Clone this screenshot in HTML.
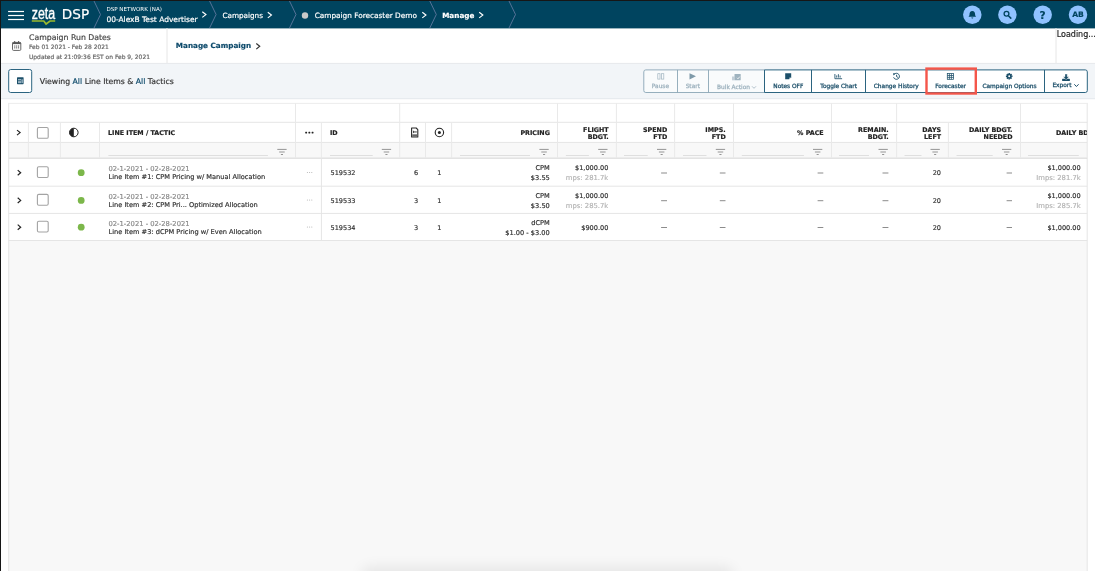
<!DOCTYPE html>
<html lang="en">
<head>
<meta charset="utf-8">
<title>Zeta DSP - Manage Campaign</title>
<style>
html,body{margin:0;padding:0}
body{width:1095px;height:571px;overflow:hidden;background:#fff;position:relative;
 font-family:"DejaVu Sans","Liberation Sans",sans-serif;color:#333}
.t{position:absolute;white-space:pre;line-height:10px;height:10px;margin:0;-webkit-text-stroke:0.18px currentColor}
.r{text-align:right}
.c{text-align:center}
.abs{position:absolute}
#edge-top{left:0;top:0;width:1095px;height:1px;background:#161616}
#edge-left{left:0;top:0;width:1px;height:571px;background:#161616}
#nav{left:1px;top:1px;width:1094px;height:27px;background:#00445f}
.nv{color:#fff}
#sub{left:1px;top:28px;width:1094px;height:35px;background:#fff}
#toolbar{left:1px;top:63px;width:1094px;height:35.5px;background:#f2f5f8}
#grid{left:8.7px;top:103.4px;width:1078.5px;height:480px;background:#f8f8f8}
#grid-head{left:8.7px;top:103.4px;width:1078.5px;height:39px;background:#fff}
#grid-rows{left:8.7px;top:158px;width:1078.5px;height:82.5px;background:#fff}
.teal{color:#0d4a6b}
.b{font-weight:bold}
.hd{font-weight:bold;font-size:6.36px;color:#222}
.cell{font-size:6.63px;color:#333}
.muted{color:#8a8a8a}
.faint{color:#b4b4b4}
.btn{font-size:5.85px;color:#1c4f69;-webkit-text-stroke:0.28px currentColor}
.dis{color:#9fb3bf}
svg{position:absolute;left:0;top:0;overflow:visible}
</style>
</head>
<body>
<div id="nav" class="abs"></div>
<div id="sub" class="abs"></div>
<div id="toolbar" class="abs"></div>
<div id="grid" class="abs"></div>
<div id="grid-head" class="abs"></div>
<div id="grid-rows" class="abs"></div>
<div class="abs" style="left:365px;top:571px;width:365px;height:10px;border-radius:6px;box-shadow:0 0 14px 4px rgba(0,0,0,0.08)"></div>
<svg style="will-change:transform" width="1095" height="571" viewBox="0 0 1095 571">
<rect x="8.7" y="142.9" width="1078.5" height="14.6" fill="#f8f8f8"/>
<rect x="8.1" y="10.9" width="15.9" height="1.2" fill="#fff" />
<rect x="8.1" y="14.9" width="15.9" height="1.2" fill="#fff" />
<rect x="8.1" y="18.9" width="15.9" height="1.2" fill="#fff" />
<text x="31.8" y="18.5" font-family="Liberation Sans, sans-serif" font-size="16" fill="#fff" stroke="#fff" stroke-width="0.35" textLength="23.4" lengthAdjust="spacingAndGlyphs">zeta</text>
<path d="M31.8 21 H43.8 L46.1 24 L50 21 H55.2" fill="none" stroke="#9ab92e" stroke-width="1.7" stroke-linejoin="miter"/>
<path d="M94.0 1 L100.5 14.5 L94.0 28" fill="none" stroke="#6b7fa6" stroke-width="0.8"/>
<path d="M209.6 1 L216.1 14.5 L209.6 28" fill="none" stroke="#6b7fa6" stroke-width="0.8"/>
<path d="M289.5 1 L296.0 14.5 L289.5 28" fill="none" stroke="#6b7fa6" stroke-width="0.8"/>
<path d="M429.8 1 L436.3 14.5 L429.8 28" fill="none" stroke="#6b7fa6" stroke-width="0.8"/>
<path d="M509.0 1 L515.5 14.5 L509.0 28" fill="none" stroke="#6b7fa6" stroke-width="0.8"/>
<path d="M202.3 11.8 L205.9 14.6 L202.3 17.4" fill="none" stroke="#fff" stroke-width="1.2"/>
<path d="M267.8 12.3 L271.40000000000003 15.1 L267.8 17.9" fill="none" stroke="#fff" stroke-width="1.2"/>
<path d="M422.3 12.3 L425.90000000000003 15.1 L422.3 17.9" fill="none" stroke="#fff" stroke-width="1.2"/>
<path d="M479.2 12.3 L482.8 15.1 L479.2 17.9" fill="none" stroke="#fff" stroke-width="1.2"/>
<circle cx="305" cy="15.5" r="3.2" fill="#c9c9c9"/>
<circle cx="972.3" cy="14.7" r="9.25" fill="#90c2ff"/>
<circle cx="1007.4" cy="14.7" r="9.25" fill="#90c2ff"/>
<circle cx="1042.7" cy="14.7" r="9.25" fill="#90c2ff"/>
<circle cx="1078.0" cy="14.7" r="9.25" fill="#90c2ff"/>
<path d="M972.3 10.9 c-2 0 -2.75 1.65 -2.75 3.2 c0 1.5 -0.55 2.15 -1.05 2.7 h7.6 c-0.5 -0.55 -1.05 -1.2 -1.05 -2.7 c0 -1.55 -0.75 -3.2 -2.75 -3.2 z M971.3 17.5 a1 1 0 0 0 2 0 z" fill="#00445f"/>
<circle cx="1006.5" cy="13.8" r="2.4" fill="none" stroke="#00445f" stroke-width="1.3"/><line x1="1008.4" y1="15.7" x2="1010.8" y2="18.1" stroke="#00445f" stroke-width="1.5" stroke-linecap="round"/>
<rect x="1" y="28" width="1094" height="0.4" fill="#00445f" />
<line x1="167" y1="28" x2="167" y2="63" stroke="#e6e6e6" stroke-width="1"/>
<line x1="1056" y1="28" x2="1056" y2="63" stroke="#e6e6e6" stroke-width="1"/>
<rect x="1" y="62.9" width="1094" height="0.8" fill="#e4e6e8" />
<g fill="none" stroke="#555" stroke-width="0.9"><rect x="12.5" y="42.4" width="8.3" height="8" rx="1"/></g><g fill="#555"><rect x="12.5" y="42.4" width="8.3" height="1.7"/><rect x="14.2" y="41" width="1" height="2"/><rect x="18.1" y="41" width="1" height="2"/><rect x="14.2" y="45.5" width="1.1" height="1.1"/><rect x="16.1" y="45.5" width="1.1" height="1.1"/><rect x="18" y="45.5" width="1.1" height="1.1"/><rect x="14.2" y="47.3" width="1.1" height="1.1"/><rect x="16.1" y="47.3" width="1.1" height="1.1"/><rect x="18" y="47.3" width="1.1" height="1.1"/></g>
<path d="M256.3 43.5 L259.7 46.3 L256.3 49.099999999999994" fill="none" stroke="#333" stroke-width="1.2"/>
<rect x="1" y="98.3" width="1094" height="0.9" fill="#e3e7eb" />
<rect x="8.7" y="69.5" width="23" height="23" rx="2" fill="#fff" stroke="#2b6480" stroke-width="1"/>
<rect x="17" y="77.2" width="6.6" height="7" rx="0.6" fill="#1c4f69"/><g fill="#cfe0ea"><rect x="18" y="79.3" width="3" height="0.8"/><rect x="18" y="80.8" width="3" height="0.8"/><rect x="18" y="82.3" width="3" height="0.8"/><rect x="21.6" y="79.3" width="1" height="3.8"/></g>
<path d="M764.5 69.9 H645.8 a2 2 0 0 0 -2 2 V90.5 a2 2 0 0 0 2 2 H764.5 z" fill="#f9fbfc" stroke="#8aa6b5" stroke-width="0.9"/>
<line x1="677.5" y1="69.9" x2="677.5" y2="92.5" stroke="#8aa6b5" stroke-width="0.9"/>
<line x1="708.5" y1="69.9" x2="708.5" y2="92.5" stroke="#8aa6b5" stroke-width="0.9"/>
<path d="M764.5 69.9 H1085.3 a2 2 0 0 1 2 2 V90.5 a2 2 0 0 1 -2 2 H764.5 z" fill="#fff" stroke="#2b6480" stroke-width="1"/>
<line x1="811.5" y1="69.9" x2="811.5" y2="92.5" stroke="#2b6480" stroke-width="1"/>
<line x1="865.5" y1="69.9" x2="865.5" y2="92.5" stroke="#2b6480" stroke-width="1"/>
<line x1="926.5" y1="69.9" x2="926.5" y2="92.5" stroke="#2b6480" stroke-width="1"/>
<line x1="976.0" y1="69.9" x2="976.0" y2="92.5" stroke="#2b6480" stroke-width="1"/>
<line x1="1044.5" y1="69.9" x2="1044.5" y2="92.5" stroke="#2b6480" stroke-width="1"/>
<rect x="926.5" y="68.6" width="49.3" height="24.9" fill="none" stroke="#f4564a" stroke-width="2.4"/>
<g fill="none" stroke="#9fb3bf" stroke-width="0.7"><rect x="657.8" y="73.7" width="2.2" height="5.4"/><rect x="661.6" y="73.7" width="2.2" height="5.4"/></g>
<path d="M689.5 73.2 L696 76.3 L689.5 79.5 z" fill="#7f9aa9"/>
<g fill="#9fb3bf"><rect x="732" y="76.5" width="2.5" height="3.8" opacity="0.6"/><rect x="734.5" y="74" width="6.2" height="6.3" rx="0.6"/></g><path d="M737 77.8 l1 1 l1.8 -2.2" stroke="#fff" stroke-width="0.8" fill="none"/>
<path d="M785.2 73.3 h6 v4 l-2 2 h-4 z" fill="#1c4f69"/><path d="M789.4 79.3 v-1.9 h1.9 z" fill="#fff" opacity="0.7"/>
<g stroke="#1c4f69" stroke-width="0.85" fill="none"><path d="M834.9 74 v4.7 h7.2"/><path d="M836.7 77.6 v-2.2 M838.4 77.6 v-3.4 M840.1 77.6 v-2"/></g>
<g stroke="#1c4f69" stroke-width="0.95" fill="none"><path d="M894.2 74.3 a3 3 0 1 1 -0.6 3"/><path d="M896.6 74.8 v1.8 l1.3 0.8"/></g><path d="M893 73.2 l2.4 0.2 l-1.9 2 z" fill="#1c4f69"/>
<g stroke="#1c4f69" stroke-width="0.75" fill="none"><rect x="947.3" y="73.6" width="6.2" height="5.7"/><path d="M949.4 73.6 v5.7 M951.4 73.6 v5.7 M947.3 75.5 h6.2 M947.3 77.4 h6.2"/></g>
<circle cx="1009.2" cy="76.3" r="1.75" fill="none" stroke="#1c4f69" stroke-width="1.55"/>
<line x1="1011.20" y1="76.30" x2="1012.50" y2="76.30" stroke="#1c4f69" stroke-width="1.5"/>
<line x1="1010.61" y1="77.71" x2="1011.53" y2="78.63" stroke="#1c4f69" stroke-width="1.5"/>
<line x1="1009.20" y1="78.30" x2="1009.20" y2="79.60" stroke="#1c4f69" stroke-width="1.5"/>
<line x1="1007.79" y1="77.71" x2="1006.87" y2="78.63" stroke="#1c4f69" stroke-width="1.5"/>
<line x1="1007.20" y1="76.30" x2="1005.90" y2="76.30" stroke="#1c4f69" stroke-width="1.5"/>
<line x1="1007.79" y1="74.89" x2="1006.87" y2="73.97" stroke="#1c4f69" stroke-width="1.5"/>
<line x1="1009.20" y1="74.30" x2="1009.20" y2="73.00" stroke="#1c4f69" stroke-width="1.5"/>
<line x1="1010.61" y1="74.89" x2="1011.53" y2="73.97" stroke="#1c4f69" stroke-width="1.5"/>
<rect x="1062.1" y="78.8" width="7.8" height="2.1" rx="0.5" fill="#1c4f69"/><path d="M1065.0 74.1 h2.2 v2.7 h1.8 l-2.9 3 l-2.9 -3 h1.8 z" fill="#1c4f69" stroke="#fff" stroke-width="0.35"/>
<path d="M752.0 86.3 l2 2 l2 -2" fill="none" stroke="#9fb3bf" stroke-width="0.8"/>
<path d="M1074.3 84.3 l2.15 2.2 l2.15 -2.2" fill="none" stroke="#1c4f69" stroke-width="1.0"/>
<rect x="8.2" y="102.9" width="1" height="480" fill="#e5e5e5" />
<rect x="1086.7" y="102.9" width="1" height="480" fill="#e5e5e5" />
<rect x="8.7" y="102.9" width="1078.5" height="1" fill="#ededed" />
<rect x="8.7" y="121.8" width="1078.5" height="1" fill="#e5e5e5" />
<rect x="8.7" y="141.9" width="1078.5" height="1" fill="#e5e5e5" />
<rect x="8.7" y="185.7" width="1078.5" height="1" fill="#e5e5e5" />
<rect x="8.7" y="212.9" width="1078.5" height="1" fill="#e5e5e5" />
<rect x="8.7" y="240.0" width="1078.5" height="1" fill="#e5e5e5" />
<rect x="8.7" y="157.6" width="1078.5" height="1.2" fill="#dcdcdc" />
<rect x="27.9" y="122.3" width="1" height="35.7" fill="#e9e9e9" />
<rect x="59.9" y="122.3" width="1" height="35.7" fill="#e9e9e9" />
<rect x="99.0" y="122.3" width="1" height="35.7" fill="#e9e9e9" />
<rect x="295.0" y="103.4" width="1" height="54.599999999999994" fill="#e9e9e9" />
<rect x="320.9" y="122.3" width="1" height="35.7" fill="#e9e9e9" />
<rect x="399.2" y="103.4" width="1" height="54.599999999999994" fill="#e9e9e9" />
<rect x="425.0" y="122.3" width="1" height="35.7" fill="#e9e9e9" />
<rect x="451.1" y="122.3" width="1" height="35.7" fill="#e9e9e9" />
<rect x="557.0" y="103.4" width="1" height="54.599999999999994" fill="#e9e9e9" />
<rect x="615.9" y="103.4" width="1" height="54.599999999999994" fill="#e9e9e9" />
<rect x="674.1" y="103.4" width="1" height="54.599999999999994" fill="#e9e9e9" />
<rect x="733.0" y="103.4" width="1" height="54.599999999999994" fill="#e9e9e9" />
<rect x="831.0" y="103.4" width="1" height="54.599999999999994" fill="#e9e9e9" />
<rect x="896.1" y="103.4" width="1" height="54.599999999999994" fill="#e9e9e9" />
<rect x="947.9" y="122.3" width="1" height="35.7" fill="#e9e9e9" />
<rect x="1020.0" y="103.4" width="1" height="54.599999999999994" fill="#e9e9e9" />
<rect x="320.9" y="158" width="1" height="82.5" fill="#e5e5e5" />
<path d="M17.0 130.1 L20.1 132.6 L17.0 135.1" fill="none" stroke="#222" stroke-width="1.15"/>
<rect x="37.4" y="127.5" width="10.8" height="10.8" rx="1.4" fill="#fff" stroke="#a3a3a3" stroke-width="1.1"/>
<circle cx="73.8" cy="132.5" r="4.3" fill="#fff" stroke="#222" stroke-width="1"/><path d="M73.8 128.2 a4.3 4.3 0 0 0 0 8.6 z" fill="#222"/>
<rect x="305.2" y="131.8" width="1.9" height="1.6" rx="0.4" fill="#222"/>
<rect x="308.4" y="131.8" width="1.9" height="1.6" rx="0.4" fill="#222"/>
<rect x="311.59999999999997" y="131.8" width="1.9" height="1.6" rx="0.4" fill="#222"/>
<path d="M411.6 128 h4.6 l1.6 1.6 v7.4 h-6.2 z" fill="#fff" stroke="#2a2a2a" stroke-width="1.1" stroke-linejoin="round"/><path d="M413.1 130.6 l2.1 1.3 l-2.1 1.3 z" fill="#2a2a2a"/><rect x="415" y="131.5" width="1.8" height="0.9" fill="#2a2a2a"/><rect x="412.2" y="134.3" width="5" height="2.4" fill="#666"/>
<circle cx="439.4" cy="132.5" r="4.2" fill="none" stroke="#222" stroke-width="1.1"/><circle cx="439.4" cy="132.5" r="1.5" fill="#222"/>
<rect x="108.4" y="155.1" width="159.49999999999997" height="0.8" fill="#d8d8d8" />
<rect x="277.3" y="148.9" width="9.3" height="1.0" fill="#959595" />
<rect x="279.2" y="151.5" width="5.5" height="1.0" fill="#959595" />
<rect x="280.90000000000003" y="154.0" width="2.1" height="1.0" fill="#959595" />
<rect x="330" y="155.1" width="42.69999999999999" height="0.8" fill="#d8d8d8" />
<rect x="381.8" y="148.9" width="9.3" height="1.0" fill="#959595" />
<rect x="383.7" y="151.5" width="5.5" height="1.0" fill="#959595" />
<rect x="385.40000000000003" y="154.0" width="2.1" height="1.0" fill="#959595" />
<rect x="460" y="155.1" width="70" height="0.8" fill="#d8d8d8" />
<rect x="539.4" y="148.9" width="9.3" height="1.0" fill="#959595" />
<rect x="541.3" y="151.5" width="5.5" height="1.0" fill="#959595" />
<rect x="543.0" y="154.0" width="2.1" height="1.0" fill="#959595" />
<rect x="565.9" y="155.1" width="23.0" height="0.8" fill="#d8d8d8" />
<rect x="598.2" y="148.9" width="9.3" height="1.0" fill="#959595" />
<rect x="600.1" y="151.5" width="5.5" height="1.0" fill="#959595" />
<rect x="601.8000000000001" y="154.0" width="2.1" height="1.0" fill="#959595" />
<rect x="624" y="155.1" width="23.700000000000045" height="0.8" fill="#d8d8d8" />
<rect x="657" y="148.9" width="9.3" height="1.0" fill="#959595" />
<rect x="658.9" y="151.5" width="5.5" height="1.0" fill="#959595" />
<rect x="660.6" y="154.0" width="2.1" height="1.0" fill="#959595" />
<rect x="683" y="155.1" width="23.5" height="0.8" fill="#d8d8d8" />
<rect x="715.8" y="148.9" width="9.3" height="1.0" fill="#959595" />
<rect x="717.6999999999999" y="151.5" width="5.5" height="1.0" fill="#959595" />
<rect x="719.4" y="154.0" width="2.1" height="1.0" fill="#959595" />
<rect x="741.8" y="155.1" width="62.10000000000002" height="0.8" fill="#d8d8d8" />
<rect x="813" y="148.9" width="9.3" height="1.0" fill="#959595" />
<rect x="814.9" y="151.5" width="5.5" height="1.0" fill="#959595" />
<rect x="816.6" y="154.0" width="2.1" height="1.0" fill="#959595" />
<rect x="839" y="155.1" width="30" height="0.8" fill="#d8d8d8" />
<rect x="878.5" y="148.9" width="9.3" height="1.0" fill="#959595" />
<rect x="880.4" y="151.5" width="5.5" height="1.0" fill="#959595" />
<rect x="882.1" y="154.0" width="2.1" height="1.0" fill="#959595" />
<rect x="904.5" y="155.1" width="17.0" height="0.8" fill="#d8d8d8" />
<rect x="930.5" y="148.9" width="9.3" height="1.0" fill="#959595" />
<rect x="932.4" y="151.5" width="5.5" height="1.0" fill="#959595" />
<rect x="934.1" y="154.0" width="2.1" height="1.0" fill="#959595" />
<rect x="956.5" y="155.1" width="36.200000000000045" height="0.8" fill="#d8d8d8" />
<rect x="1002" y="148.9" width="9.3" height="1.0" fill="#959595" />
<rect x="1003.9" y="151.5" width="5.5" height="1.0" fill="#959595" />
<rect x="1005.6" y="154.0" width="2.1" height="1.0" fill="#959595" />
<rect x="1028" y="155.1" width="50.799999999999955" height="0.8" fill="#d8d8d8" />
<path d="M17.7 170.1 L20.7 172.7 L17.7 175.29999999999998" fill="none" stroke="#222" stroke-width="1.15"/>
<rect x="37.4" y="166.7" width="10.8" height="10.8" rx="1.4" fill="#fff" stroke="#a3a3a3" stroke-width="1.1"/>
<circle cx="81.2" cy="172.7" r="3.4" fill="#7cb74a"/>
<circle cx="307.4" cy="172.39999999999998" r="0.5" fill="#aaa"/>
<circle cx="309.59999999999997" cy="172.39999999999998" r="0.5" fill="#aaa"/>
<circle cx="311.79999999999995" cy="172.39999999999998" r="0.5" fill="#aaa"/>
<rect x="661.1" y="172.5" width="5.899999999999977" height="1.0" fill="#8c8c8c" />
<rect x="719.8" y="172.5" width="5.7000000000000455" height="1.0" fill="#8c8c8c" />
<rect x="817.6" y="172.5" width="5.699999999999932" height="1.0" fill="#8c8c8c" />
<rect x="882.5" y="172.5" width="5.899999999999977" height="1.0" fill="#8c8c8c" />
<rect x="1006.6" y="172.5" width="5.399999999999977" height="1.0" fill="#8c8c8c" />
<path d="M17.7 197.8 L20.7 200.4 L17.7 203.0" fill="none" stroke="#222" stroke-width="1.15"/>
<rect x="37.4" y="194.4" width="10.8" height="10.8" rx="1.4" fill="#fff" stroke="#a3a3a3" stroke-width="1.1"/>
<circle cx="81.2" cy="200.4" r="3.4" fill="#7cb74a"/>
<circle cx="307.4" cy="200.1" r="0.5" fill="#aaa"/>
<circle cx="309.59999999999997" cy="200.1" r="0.5" fill="#aaa"/>
<circle cx="311.79999999999995" cy="200.1" r="0.5" fill="#aaa"/>
<rect x="661.1" y="200.20000000000002" width="5.899999999999977" height="1.0" fill="#8c8c8c" />
<rect x="719.8" y="200.20000000000002" width="5.7000000000000455" height="1.0" fill="#8c8c8c" />
<rect x="817.6" y="200.20000000000002" width="5.699999999999932" height="1.0" fill="#8c8c8c" />
<rect x="882.5" y="200.20000000000002" width="5.899999999999977" height="1.0" fill="#8c8c8c" />
<rect x="1006.6" y="200.20000000000002" width="5.399999999999977" height="1.0" fill="#8c8c8c" />
<path d="M17.7 224.6 L20.7 227.2 L17.7 229.79999999999998" fill="none" stroke="#222" stroke-width="1.15"/>
<rect x="37.4" y="221.2" width="10.8" height="10.8" rx="1.4" fill="#fff" stroke="#a3a3a3" stroke-width="1.1"/>
<circle cx="81.2" cy="227.2" r="3.4" fill="#7cb74a"/>
<circle cx="307.4" cy="226.89999999999998" r="0.5" fill="#aaa"/>
<circle cx="309.59999999999997" cy="226.89999999999998" r="0.5" fill="#aaa"/>
<circle cx="311.79999999999995" cy="226.89999999999998" r="0.5" fill="#aaa"/>
<rect x="661.1" y="227.0" width="5.899999999999977" height="1.0" fill="#8c8c8c" />
<rect x="719.8" y="227.0" width="5.7000000000000455" height="1.0" fill="#8c8c8c" />
<rect x="817.6" y="227.0" width="5.699999999999932" height="1.0" fill="#8c8c8c" />
<rect x="882.5" y="227.0" width="5.899999999999977" height="1.0" fill="#8c8c8c" />
<rect x="1006.6" y="227.0" width="5.399999999999977" height="1.0" fill="#8c8c8c" />
<defs><radialGradient id="sh" cx="0.5" cy="1" r="1" gradientTransform="matrix(1 0 0 1 0 0)"><stop offset="0" stop-color="#000" stop-opacity="0.07"/><stop offset="1" stop-color="#000" stop-opacity="0"/></radialGradient></defs>
</svg>
<div id="edge-top" class="abs"></div>
<div id="edge-left" class="abs"></div>
<div id="txt" class="abs" style="left:0;top:0;width:1095px;height:571px;will-change:transform">
<div class="t nv" style="top:8.90px;font-size:13.6px;left:61.80px;">DSP</div>
<div class="t nv" style="top:4.00px;font-size:5.57px;left:106.40px;-webkit-text-stroke:0;">DSP NETWORK (NA)</div>
<div class="t nv" style="top:14.50px;font-size:7.49px;left:106.40px;">00-AlexB Test Advertiser</div>
<div class="t nv" style="top:10.80px;font-size:7.25px;left:222.40px;">Campaigns</div>
<div class="t nv" style="top:10.80px;font-size:7.34px;left:314.70px;">Campaign Forecaster Demo</div>
<div class="t nv b" style="top:10.80px;font-size:7.23px;left:442.20px;">Manage</div>
<div class="t b c" style="top:9.90px;font-size:7.6px;left:1028.00px;width:100px;color:#00445f;">AB</div>
<div class="t b c" style="top:10.40px;font-size:10.6px;left:992.70px;width:100px;color:#00445f;">?</div>
<div class="t " style="top:32.80px;font-size:7.78px;left:29.00px;color:#444;">Campaign Run Dates</div>
<div class="t " style="top:41.50px;font-size:5.95px;left:29.00px;color:#666;">Feb 01 2021 - Feb 28 2021</div>
<div class="t " style="top:52.00px;font-size:5.94px;left:29.00px;color:#666;">Updated at 21:09:36 EST on Feb 9, 2021</div>
<div class="t b teal" style="top:40.70px;font-size:7.24px;left:175.80px;">Manage Campaign</div>
<div class="t " style="top:29.50px;font-size:8.0px;left:1056.70px;color:#222;">Loading...</div>
<div class="t " style="top:76.50px;font-size:7.74px;left:39.80px;color:#333;">Viewing <span class="teal">All</span> Line Items &amp; <span class="teal">All</span> Tactics</div>
<div class="t btn dis c" style="top:81.00px;font-size:5.85px;left:610.40px;width:100px;">Pause</div>
<div class="t btn dis c" style="top:81.00px;font-size:5.85px;left:642.80px;width:100px;">Start</div>
<div class="t btn dis c" style="top:82.00px;font-size:5.85px;left:683.50px;width:100px;">Bulk Action</div>
<div class="t btn c" style="top:81.00px;font-size:5.85px;left:738.30px;width:100px;">Notes OFF</div>
<div class="t btn c" style="top:81.00px;font-size:5.85px;left:788.70px;width:100px;">Toggle Chart</div>
<div class="t btn c" style="top:81.00px;font-size:5.85px;left:846.30px;width:100px;">Change History</div>
<div class="t btn c" style="top:81.00px;font-size:5.85px;left:900.60px;width:100px;">Forecaster</div>
<div class="t btn c" style="top:81.00px;font-size:5.85px;left:959.50px;width:100px;">Campaign Options</div>
<div class="t btn c" style="top:80.00px;font-size:5.85px;left:1012.00px;width:100px;">Export</div>
<div class="t hd" style="top:128.00px;font-size:6.36px;left:108.00px;">LINE ITEM / TACTIC</div>
<div class="t hd" style="top:128.00px;font-size:6.36px;left:330.00px;">ID</div>
<div class="t hd r" style="top:128.00px;font-size:6.36px;right:545.10px;">PRICING</div>
<div class="t hd r" style="top:124.50px;font-size:6.36px;right:486.30px;">FLIGHT</div>
<div class="t hd r" style="top:131.90px;font-size:6.36px;right:486.30px;">BDGT.</div>
<div class="t hd r" style="top:124.50px;font-size:6.36px;right:427.80px;">SPEND</div>
<div class="t hd r" style="top:131.90px;font-size:6.36px;right:427.80px;">FTD</div>
<div class="t hd r" style="top:124.50px;font-size:6.36px;right:369.30px;">IMPS.</div>
<div class="t hd r" style="top:131.90px;font-size:6.36px;right:369.30px;">FTD</div>
<div class="t hd r" style="top:128.00px;font-size:6.36px;right:271.30px;">% PACE</div>
<div class="t hd r" style="top:124.50px;font-size:6.36px;right:206.30px;">REMAIN.</div>
<div class="t hd r" style="top:131.90px;font-size:6.36px;right:206.30px;">BDGT.</div>
<div class="t hd r" style="top:124.50px;font-size:6.36px;right:153.90px;">DAYS</div>
<div class="t hd r" style="top:131.90px;font-size:6.36px;right:153.90px;">LEFT</div>
<div class="t hd r" style="top:124.50px;font-size:6.36px;right:82.50px;">DAILY BDGT.</div>
<div class="t hd r" style="top:131.90px;font-size:6.36px;right:82.50px;">NEEDED</div>
<div class="abs" style="left:1050px;top:125px;width:36.7px;height:14px;overflow:hidden"><div class="t hd" style="left:6px;top:3px;font-size:6.36px">DAILY BDGT.</div></div>
<div class="t cell muted" style="top:164.30px;font-size:6.77px;left:108.50px;">02-1-2021 - 02-28-2021</div>
<div class="t cell" style="top:172.40px;font-size:6.63px;left:108.50px;">Line Item #1: CPM Pricing w/ Manual Allocation</div>
<div class="t cell" style="top:168.20px;font-size:6.5px;left:330.60px;">519532</div>
<div class="t cell c" style="top:168.20px;font-size:6.5px;left:366.00px;width:100px;">6</div>
<div class="t cell c" style="top:168.20px;font-size:6.5px;left:389.40px;width:100px;">1</div>
<div class="t cell r" style="top:163.20px;font-size:6.63px;right:545.20px;">CPM</div>
<div class="t cell r" style="top:173.30px;font-size:6.63px;right:545.20px;">$3.55</div>
<div class="t cell r" style="top:163.20px;font-size:6.56px;right:486.70px;">$1,000.00</div>
<div class="abs" style="left:565.9px;top:173.30px;width:42.4px;height:10px;overflow:hidden"><div class="t cell faint r" style="right:0;top:0;font-size:6.82px">Imps: 281.7k</div></div>
<div class="t cell r" style="top:163.20px;font-size:6.56px;right:14.30px;">$1,000.00</div>
<div class="t cell faint r" style="top:173.30px;font-size:6.82px;right:14.30px;">Imps: 281.7k</div>
<div class="t cell r" style="top:168.20px;font-size:6.5px;right:154.00px;">20</div>
<div class="t cell muted" style="top:191.60px;font-size:6.77px;left:108.50px;">02-1-2021 - 02-28-2021</div>
<div class="t cell" style="top:200.40px;font-size:6.63px;left:108.50px;">Line Item #2: CPM Pri... Optimized Allocation</div>
<div class="t cell" style="top:195.90px;font-size:6.5px;left:330.60px;">519533</div>
<div class="t cell c" style="top:195.90px;font-size:6.5px;left:366.00px;width:100px;">3</div>
<div class="t cell c" style="top:195.90px;font-size:6.5px;left:389.40px;width:100px;">1</div>
<div class="t cell r" style="top:190.90px;font-size:6.63px;right:545.20px;">CPM</div>
<div class="t cell r" style="top:201.00px;font-size:6.63px;right:545.20px;">$3.50</div>
<div class="t cell r" style="top:190.90px;font-size:6.56px;right:486.70px;">$1,000.00</div>
<div class="abs" style="left:565.9px;top:201.00px;width:42.4px;height:10px;overflow:hidden"><div class="t cell faint r" style="right:0;top:0;font-size:6.82px">Imps: 285.7k</div></div>
<div class="t cell r" style="top:190.90px;font-size:6.56px;right:14.30px;">$1,000.00</div>
<div class="t cell faint r" style="top:201.00px;font-size:6.82px;right:14.30px;">Imps: 285.7k</div>
<div class="t cell r" style="top:195.90px;font-size:6.5px;right:154.00px;">20</div>
<div class="t cell muted" style="top:219.00px;font-size:6.77px;left:108.50px;">02-1-2021 - 02-28-2021</div>
<div class="t cell" style="top:227.40px;font-size:6.63px;left:108.50px;">Line Item #3: dCPM Pricing w/ Even Allocation</div>
<div class="t cell" style="top:222.70px;font-size:6.5px;left:330.60px;">519534</div>
<div class="t cell c" style="top:222.70px;font-size:6.5px;left:366.00px;width:100px;">3</div>
<div class="t cell c" style="top:222.70px;font-size:6.5px;left:389.40px;width:100px;">1</div>
<div class="t cell r" style="top:217.70px;font-size:6.63px;right:545.20px;">dCPM</div>
<div class="t cell r" style="top:227.80px;font-size:6.63px;right:545.20px;">$1.00 - $3.00</div>
<div class="t cell r" style="top:222.70px;font-size:6.56px;right:486.70px;">$900.00</div>
<div class="t cell r" style="top:222.70px;font-size:6.56px;right:14.30px;">$1,000.00</div>
<div class="t cell r" style="top:222.70px;font-size:6.5px;right:154.00px;">20</div>
</div>
</body>
</html>
